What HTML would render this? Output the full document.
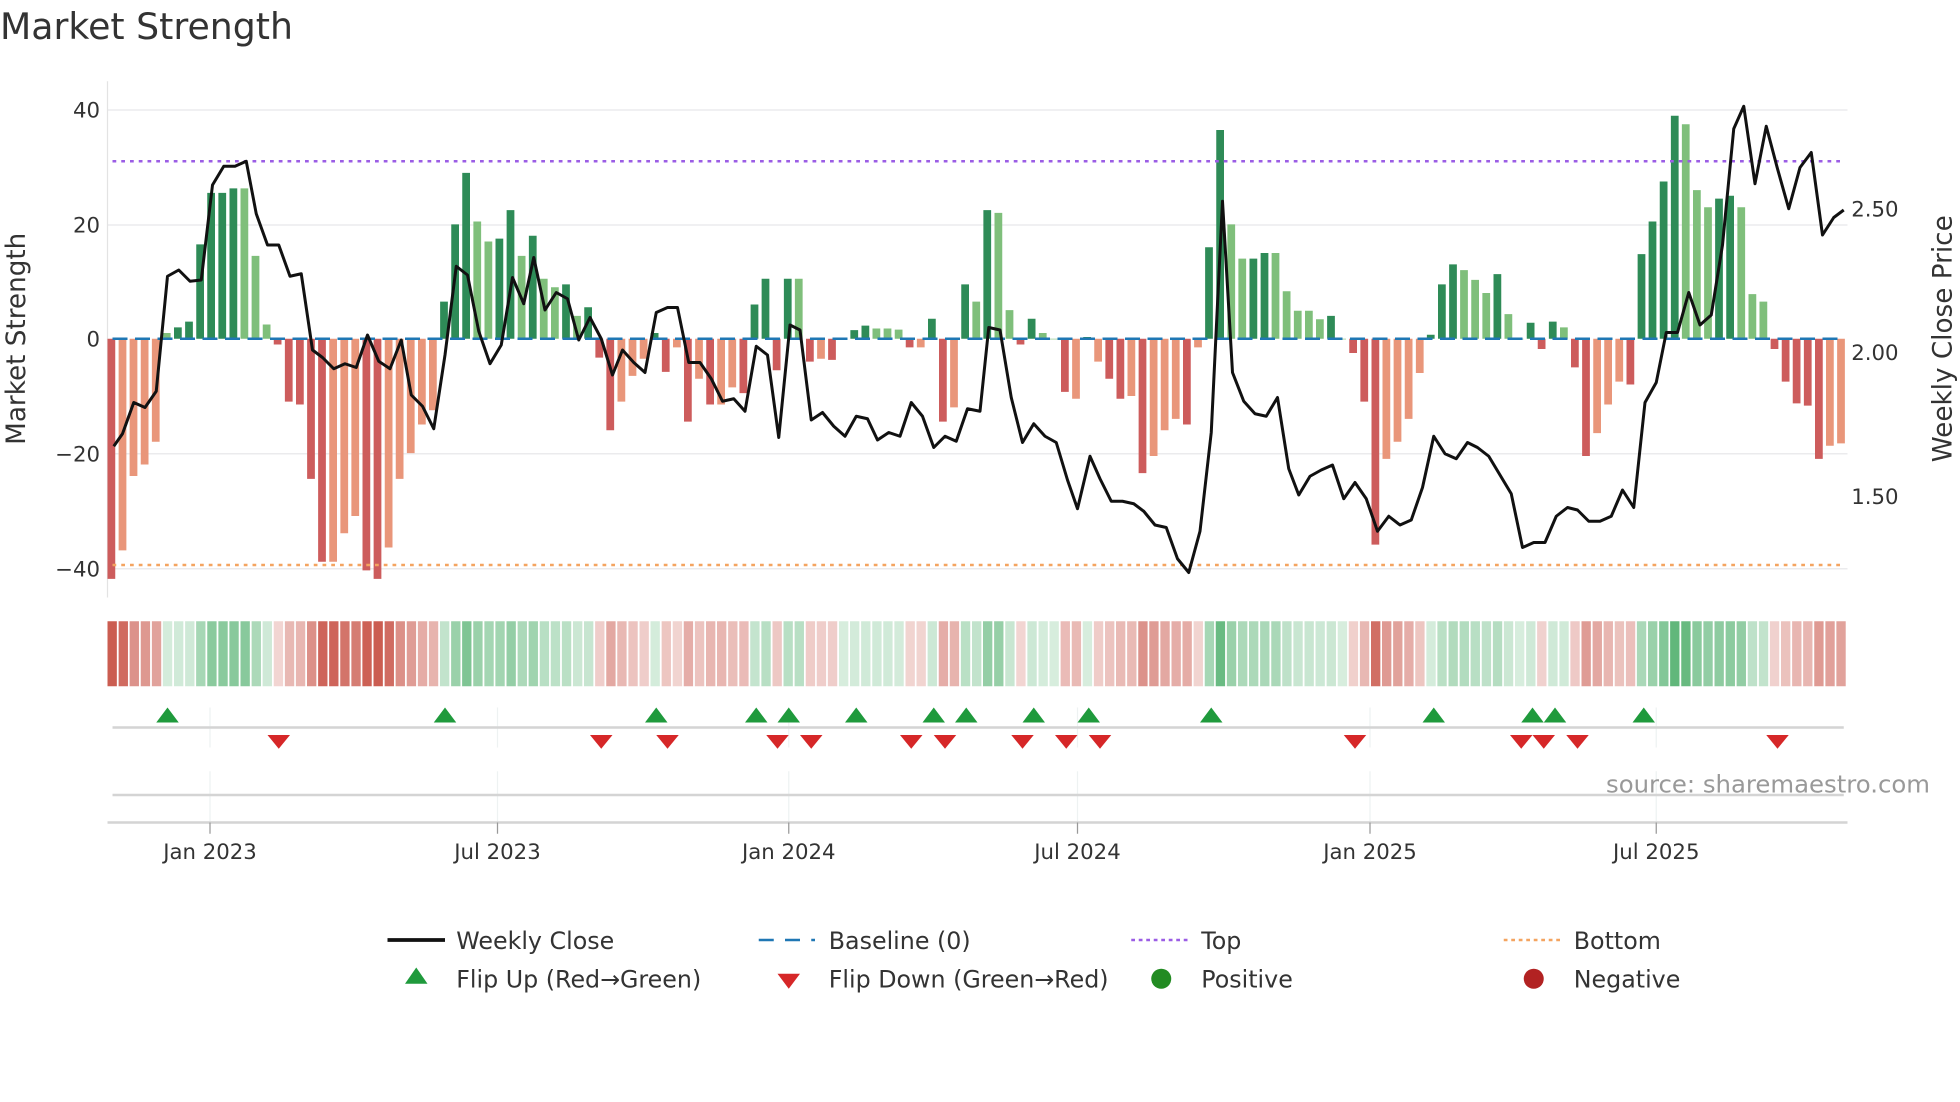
<!DOCTYPE html>
<html><head><meta charset="utf-8"><style>
html,body{margin:0;padding:0;background:#fff;width:1960px;height:1102px;overflow:hidden}
svg{display:block}
text{font-family:"DejaVu Sans","Liberation Sans",sans-serif;fill:#333}
</style></head><body>
<svg id="s" width="1960" height="1102" viewBox="0 0 1568 881.6" xmlns="http://www.w3.org/2000/svg">
<text x="0" y="31" font-size="29">Market Strength</text>
<g stroke="#ebebed" stroke-width="1.2">
<line x1="86" y1="88" x2="1478" y2="88"/><line x1="86" y1="180" x2="1478" y2="180"/>
<line x1="86" y1="363" x2="1478" y2="363"/><line x1="86" y1="455" x2="1478" y2="455"/>
</g>
<line x1="86" y1="65" x2="86" y2="478" stroke="#e3e3e3" stroke-width="1"/>
<g id="bars"></g>
<line x1="90" y1="271" x2="1475" y2="271" stroke="#1f77b4" stroke-width="2" stroke-dasharray="12,6"/>
<line x1="90" y1="129" x2="1475" y2="129" stroke="#9b5de5" stroke-width="2" stroke-dasharray="3,4"/>
<line x1="90" y1="452" x2="1475" y2="452" stroke="#f4a460" stroke-width="2" stroke-dasharray="3,4"/>
<polyline id="price" fill="none" stroke="#111" stroke-width="2.4" stroke-linejoin="round"/>
<g font-size="17" text-anchor="end">
<text x="80" y="94">40</text><text x="80" y="186">20</text><text x="80" y="277">0</text>
<text x="80" y="369">−20</text><text x="80" y="461">−40</text>
</g>
<g font-size="17">
<text x="1481" y="173">2.50</text><text x="1481" y="288">2.00</text><text x="1481" y="403">1.50</text>
</g>
<text transform="translate(20,271) rotate(-90)" font-size="21" text-anchor="middle">Market Strength</text>
<text transform="translate(1561,271) rotate(-90)" font-size="21" text-anchor="middle">Weekly Close Price</text>
<g id="strip"></g>
<g stroke="#eef2f2" stroke-width="1">
<line x1="168" y1="566" x2="168" y2="598"/><line x1="398" y1="566" x2="398" y2="598"/>
<line x1="631" y1="566" x2="631" y2="598"/><line x1="862" y1="566" x2="862" y2="598"/>
<line x1="1096" y1="566" x2="1096" y2="598"/><line x1="1325" y1="566" x2="1325" y2="598"/>
<line x1="168" y1="617" x2="168" y2="658"/><line x1="398" y1="617" x2="398" y2="658"/>
<line x1="631" y1="617" x2="631" y2="658"/><line x1="862" y1="617" x2="862" y2="658"/>
<line x1="1096" y1="617" x2="1096" y2="658"/><line x1="1325" y1="617" x2="1325" y2="658"/>
</g>
<line x1="90" y1="582" x2="1475" y2="582" stroke="#d4d4d4" stroke-width="2"/>
<line x1="90" y1="636" x2="1475" y2="636" stroke="#d4d4d4" stroke-width="2"/>
<line x1="86" y1="658" x2="1478" y2="658" stroke="#d4d4d4" stroke-width="2"/>
<g stroke="#999" stroke-width="1">
<line x1="168" y1="658" x2="168" y2="667"/><line x1="398" y1="658" x2="398" y2="667"/>
<line x1="631" y1="658" x2="631" y2="667"/><line x1="862" y1="658" x2="862" y2="667"/>
<line x1="1096" y1="658" x2="1096" y2="667"/><line x1="1325" y1="658" x2="1325" y2="667"/>
</g>
<g id="flips"></g>
<text x="1544" y="634" font-size="19.5" text-anchor="end" style="fill:#999">source: sharemaestro.com</text>
<g font-size="17" text-anchor="middle">
<text x="168" y="687">Jan 2023</text><text x="398" y="687">Jul 2023</text>
<text x="631" y="687">Jan 2024</text><text x="862" y="687">Jul 2024</text>
<text x="1096" y="687">Jan 2025</text><text x="1325" y="687">Jul 2025</text>
</g>
<line x1="310" y1="752" x2="356" y2="752" stroke="#111" stroke-width="3"/>
<line x1="607" y1="752" x2="652" y2="752" stroke="#1f77b4" stroke-width="2" stroke-dasharray="12,9"/>
<line x1="905" y1="752" x2="950" y2="752" stroke="#9b5de5" stroke-width="2" stroke-dasharray="3,3"/>
<line x1="1203" y1="752" x2="1248" y2="752" stroke="#f4a460" stroke-width="2" stroke-dasharray="3,3"/>
<polygon points="333,774 342,787 324,787" fill="#1f9a3c"/>
<polygon points="622,779 640,779 631,791" fill="#d62728"/>
<circle cx="929" cy="783" r="8" fill="#228b22"/>
<circle cx="1227" cy="783" r="8" fill="#b22222"/>
<g font-size="19">
<text x="365" y="759">Weekly Close</text><text x="663" y="759">Baseline (0)</text>
<text x="961" y="759">Top</text><text x="1259" y="759">Bottom</text>
<text x="365" y="790">Flip Up (Red→Green)</text><text x="663" y="790">Flip Down (Green→Red)</text>
<text x="961" y="790">Positive</text><text x="1259" y="790">Negative</text>
</g>
</svg>
<script>
var V="-42D,-37L,-24L,-22L,-18L,1L,2D,3D,16.5D,25.5D,25.5D,26.3D,26.3L,14.5L,2.5L,-1D,-11D,-11.5D,-24.5D,-39D,-39L,-34L,-31L,-40.5D,-42D,-36.5L,-24.5L,-20L,-15L,-12.5L,6.5D,20D,29D,20.5L,17L,17.5D,22.5D,14.5L,18D,10.5L,9L,9.5D,4L,5.5D,-3.3D,-16D,-11L,-6.5L,-3.5L,1D,-5.8D,-1.5L,-14.5D,-7L,-11.5D,-11.5L,-8.5L,-9.5D,6D,10.5D,-5.5D,10.5D,10.5L,-4D,-3.5L,-3.7D,0L,1.5D,2.3D,1.8L,1.8L,1.6L,-1.5D,-1.5L,3.5D,-14.5D,-12L,9.5D,6.5L,22.5D,22L,5L,-1D,3.5D,1L,0L,-9.3D,-10.5L,0.3D,-4L,-7D,-10.5D,-10L,-23.5D,-20.5L,-16L,-14L,-15D,-1.5L,16D,36.5D,20L,14L,14D,15D,15L,8.3L,4.9L,4.9L,3.4L,4D,0L,-2.5D,-11D,-36D,-21L,-18L,-14L,-6L,0.7D,9.5D,13D,12L,10.3L,8L,11.3D,4.3L,0L,2.8D,-1.8D,3D,2L,-5D,-20.5D,-16.5L,-11.5L,-7.5L,-8D,14.8D,20.5D,27.5D,39D,37.5L,26L,23L,24.5D,25D,23L,7.8L,6.5L,-1.8D,-7.5D,-11.3D,-11.7D,-21D,-18.7L,-18.3L".split(",");
var bars=document.getElementById("bars"),strip=document.getElementById("strip"),b="",s="";
var sw=(1478-86)/V.length;
V.forEach(function(t,i){var v=parseFloat(t),d=t.slice(-1)=="D",x=89+8.87*i;
var y0=271,y1=271-v*4.575,top=Math.min(y0,y1),h=Math.max(Math.abs(y1-y0),0.5);
var c=v>=0?(d?"#2e8b57":"#7fbf7b"):(d?"#cd5c5c":"#e9967a");
b+='<rect x="'+(x-3).toFixed(1)+'" y="'+top.toFixed(1)+'" width="6.2" height="'+h.toFixed(1)+'" fill="'+c+'"/>';
var a=0.2+0.62*Math.min(Math.abs(v),42)/42;var sc=v>=0?"#35a356":"#c0392b";
s+='<rect x="'+(86+sw*i).toFixed(1)+'" y="497" width="'+(sw-1.4).toFixed(2)+'" height="52" fill="'+sc+'" fill-opacity="'+a.toFixed(2)+'"/>';});
bars.innerHTML=b;strip.innerHTML=s;
document.getElementById("price").setAttribute("points","91,357 98,347 107,322 116,326 125,313 134,221 143,216 152,225 161,224 170,148 179,133 188,133 197,129 205,171 214,196 223,196 232,221 241,219 250,280 258,286 267,295 276,291 285,294 294,268 303,289 312,295 321,272 329,316 338,325 347,343 356,284 365,213 374,220 383,265 392,291 401,276 410,222 419,243 427,206 436,248 445,234 454,239 463,272 472,254 481,271 490,300 498,280 507,290 516,298 525,250 534,246 542,246 551,290 560,290 569,303 578,321 587,319 596,329 605,277 614,284 623,350 632,260 640,264 649,336 658,330 667,341 676,349 685,333 694,335 702,352 711,346 720,349 729,322 738,333 747,358 756,349 765,353 774,327 784,329 791,262 800,264 809,318 818,354 827,339 836,349 845,354 854,384 862,407 872,365 880,383 889,401 898,401 907,403 915,409 924,420 933,422 942,447 951,458 960,425 969,346 978,161 986,298 995,321 1004,331 1013,333 1022,318 1031,375 1039,396 1048,381 1057,376 1066,372 1075,399 1084,386 1093,399 1102,425 1111,413 1120,420 1129,416 1138,390 1147,349 1156,363 1165,367 1174,354 1182,358 1191,365 1200,380 1209,395 1218,438 1227,434 1236,434 1245,413 1254,406 1262,408 1271,417 1280,417 1289,413 1298,392 1307,406 1316,322 1325,306 1333,266 1342,266 1351,234 1360,260 1369,252 1378,196 1387,103 1395,85 1404,147 1413,101 1422,135 1431,167 1440,134 1449,122 1458,188 1467,174 1475,168");
var up=[134,356,525,605,631,685,747,773,827,871,969,1147,1226,1244,1315],dn=[223,481,534,622,649,729,756,818,853,880,1084,1217,1235,1262,1422],f="";
up.forEach(function(x){f+='<polygon points="'+x+',566 '+(x+9)+',578 '+(x-9)+',578" fill="#1f9a3c"/>';});
dn.forEach(function(x){f+='<polygon points="'+(x-9)+',588 '+(x+9)+',588 '+x+',599" fill="#d62728"/>';});
document.getElementById("flips").innerHTML=f;
</script>
</body></html>
